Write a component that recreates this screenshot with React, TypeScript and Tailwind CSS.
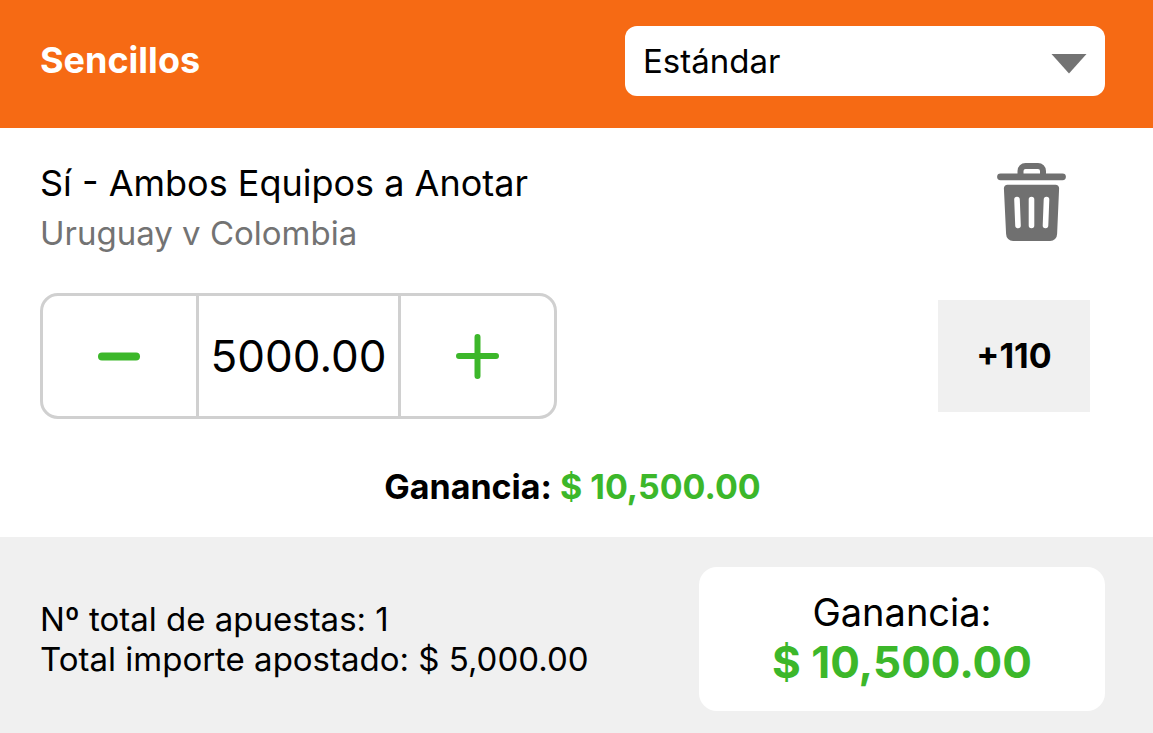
import { useState } from "react";

const ODDS_RETURN = 2.1;

const formatMoney = (value: number) =>
  "$ " + value.toLocaleString("en-US", { minimumFractionDigits: 2, maximumFractionDigits: 2 });

function TrashIcon() {
  return (
    <svg viewBox="0 0 70 78" className="w-[70px] h-[78px]" fill="none" aria-hidden="true">
      <path d="M23.500 12V8a5 5 0 0 1 5-5h12.500a5 5 0 0 1 5 5v4" stroke="#707070" strokeWidth="6" />
      <path d="M3.500 13.800h62" stroke="#707070" strokeWidth="6.800" strokeLinecap="round" />
      <path
        d="M10.500 21.700h48a3.600 3.600 0 0 1 3.600 3.800l-2 45.500a7 7 0 0 1-7 7h-37a7 7 0 0 1-7-7l-2.200-45.500a3.600 3.600 0 0 1 3.600-3.800z"
        fill="#707070"
      />
      <path
        d="M20 36.500l1 26M34.500 36.500v26M49.500 36.500l-1 26"
        stroke="white"
        strokeWidth="5.600"
        strokeLinecap="round"
      />
    </svg>
  );
}

export default function App() {
  const [stake, setStake] = useState("5000.00");
  const amount = Number(stake) || 0;
  const winnings = formatMoney(amount * ODDS_RETURN);

  const changeStake = (step: number) => setStake(Math.max(0, amount + step).toFixed(2));

  return (
    <div className="bg-white font-['Inter',sans-serif] text-[33px] leading-10 text-black">
      {/* Header */}
      <header className="flex items-start justify-between bg-[#f66a14] pt-[26px] pb-8 pl-10 pr-12">
        <h1 className="py-[14px] text-[36px] font-bold text-white">Sencillos</h1>
        <div className="relative w-[480px]">
          <select
            aria-label="Tipo de apuesta"
            className="h-[70px] w-full appearance-none rounded-xl bg-white pl-[18px] pr-16"
          >
            <option>Estándar</option>
            <option>Sistema</option>
          </select>
          <svg
            viewBox="0 0 36 20"
            className="pointer-events-none absolute right-[18px] top-7 h-5 w-9"
            aria-hidden="true"
          >
            <path d="M0.500 0h35L18 19.500z" fill="#737373" />
          </svg>
        </div>
      </header>

      {/* Selection */}
      <main className="pl-10 pr-12 pt-[30px] pb-[30px]">
        <div className="flex items-start justify-between">
          <div>
            <h2 className="text-[36px] leading-[50px]">Sí - Ambos Equipos a Anotar</h2>
            <p className="leading-[50px] text-[#737373]">Uruguay v Colombia</p>
          </div>
          <button type="button" aria-label="Eliminar apuesta" className="mr-[38px] mt-[5px]">
            <TrashIcon />
          </button>
        </div>

        <div className="mt-[35px] flex items-center justify-between">
          <div className="flex h-[126px] w-[517px] divide-x-3 divide-[#d0d0d0] overflow-hidden rounded-[18px] border-3 border-[#d0d0d0]">
            <button
              type="button"
              aria-label="Reducir importe"
              onClick={() => changeStake(-100)}
              className="flex flex-1 items-center justify-center"
            >
              <svg viewBox="0 0 44 46" className="h-[46px] w-11" aria-hidden="true">
                <path d="M4 23.500h34" stroke="#3cb72a" strokeWidth="8" strokeLinecap="round" />
              </svg>
            </button>
            <input
              aria-label="Importe"
              inputMode="decimal"
              value={stake}
              onChange={(e) => setStake(e.target.value)}
              className="w-[202px] text-center text-[44px] outline-none"
            />
            <button
              type="button"
              aria-label="Aumentar importe"
              onClick={() => changeStake(100)}
              className="flex flex-1 items-center justify-center"
            >
              <svg viewBox="0 0 44 46" className="h-[46px] w-11" aria-hidden="true">
                <path d="M3 23h37M21.500 4v39" stroke="#3cb72a" strokeWidth="6" strokeLinecap="round" />
              </svg>
            </button>
          </div>
          <div className="mr-[15px] flex h-28 w-[152px] items-center justify-center bg-[#f0f0f0] text-[34px] font-bold">
            +110
          </div>
        </div>

        <p className="mt-12 text-center text-[34px] font-bold">
          Ganancia: <span className="text-[#3cb72a]">{winnings}</span>
        </p>
      </main>

      {/* Totals */}
      <footer className="flex items-center justify-between bg-[#f0f0f0] pt-[30px] pb-[22px] pl-10 pr-12">
        <div>
          <p>Nº total de apuestas: 1</p>
          <p>Total importe apostado: {formatMoney(amount)}</p>
        </div>
        <div className="h-36 w-[406px] rounded-[18px] bg-white pt-5 text-center leading-[50px]">
          <p className="text-[38px]">Ganancia:</p>
          <p className="text-[44px] font-bold text-[#3cb72a]">{winnings}</p>
        </div>
      </footer>
    </div>
  );
}
